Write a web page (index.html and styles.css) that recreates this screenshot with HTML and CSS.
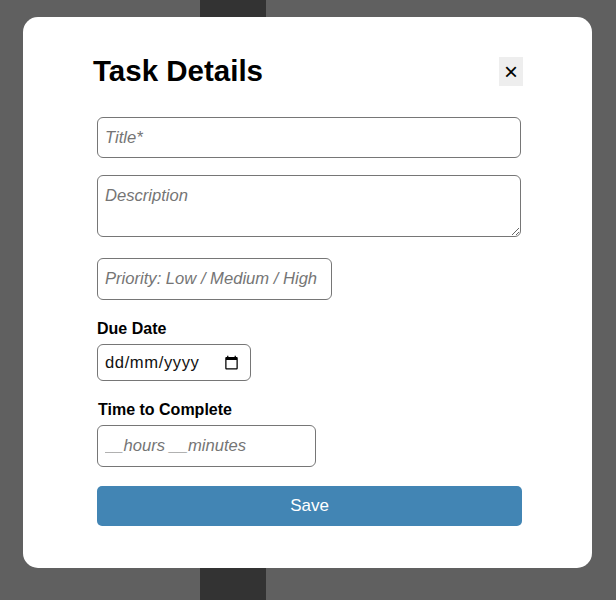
FILE: index.html
```html
<!DOCTYPE html>
<html lang="en">
<head>
<meta charset="utf-8">
<title>Task Details</title>
<link rel="stylesheet" href="styles.css">
</head>
<body>
<div class="modal">
  <div class="modal-header">
    <h2 class="modal-title">Task Details</h2>
    <button class="close-btn" type="button" aria-label="Close">×</button>
  </div>
  <form class="task-form">
    <input class="field field-title" type="text" placeholder="Title*">
    <textarea class="field field-desc" placeholder="Description"></textarea>
    <input class="field field-priority" type="text" placeholder="Priority: Low / Medium / High">
    <label class="field-label label-due">Due Date</label>
    <div class="field field-date" role="textbox" aria-label="Due Date">
      <span class="date-text">dd/mm/yyyy</span>
      <svg class="date-icon" width="15" height="15" viewBox="0 0 24 24" aria-hidden="true">
        <path d="M20 3h-1V1h-2v2H7V1H5v2H4c-1.1 0-2 .9-2 2v16c0 1.1.9 2 2 2h16c1.1 0 2-.9 2-2V5c0-1.1-.9-2-2-2zm0 18H4V8h16v13z" fill="#000"/>
      </svg>
    </div>
    <label class="field-label label-time">Time to Complete</label>
    <input class="field field-time" type="text" placeholder="__hours __minutes">
    <button class="save-btn" type="button">Save</button>
  </form>
</div>
</body>
</html>
```
FILE: styles.css
```css
html, body {
  margin: 0;
  padding: 0;
}
body {
  width: 616px;
  height: 600px;
  overflow: hidden;
  font-family: "Liberation Sans", Arial, sans-serif;
  background: linear-gradient(to right, #606060 0, #606060 200px, #333333 200px, #333333 266px, #606060 266px);
  padding-top: 17px;
  box-sizing: border-box;
}
.modal {
  margin-left: 23px;
  width: 569px;
  height: 551px;
  box-sizing: border-box;
  background: #ffffff;
  border-radius: 15px;
  padding: 40px 69px 0 70px;
}
.modal-header {
  display: flex;
  justify-content: space-between;
  align-items: flex-start;
  height: 29px;
}
.modal-title {
  margin: 0;
  font-size: 29.5px;
  line-height: 28px;
  font-weight: bold;
  color: #000;
}
.close-btn {
  width: 24px;
  height: 29px;
  padding: 0;
  border: none;
  background: #eeeeee;
  font-family: "Liberation Sans", Arial, sans-serif;
  font-size: 24px;
  line-height: 29px;
  color: #000;
}
.task-form {
  display: flex;
  flex-direction: column;
  align-items: flex-start;
  padding-left: 4px;
  margin-top: 31px;
}
.field {
  box-sizing: border-box;
  border: 1px solid #767676;
  border-radius: 6px;
  padding: 0 7px;
  font-family: "Liberation Sans", Arial, sans-serif;
  font-size: 16.6px;
  color: #000;
  background: #fff;
  margin: 0;
}
.field::placeholder {
  font-style: italic;
  color: #757575;
}
.field-title {
  width: 424px;
  height: 41px;
}
.field-desc {
  width: 424px;
  height: 62px;
  margin-top: 17px;
  padding-top: 10px;
  resize: vertical;
}
.field-priority {
  width: 235px;
  height: 42px;
  margin-top: 21px;
}
.field-label {
  font-size: 16px;
  font-weight: bold;
  line-height: 18px;
  color: #000;
}
.label-due {
  margin-top: 20px;
}
.field-date {
  width: 154px;
  height: 37px;
  margin-top: 6px;
  display: flex;
  align-items: center;
  justify-content: space-between;
  padding-right: 11px;
}
.date-text {
  letter-spacing: 0.6px;
  color: #111;
}
.date-icon {
  display: block;
}
.label-time {
  margin-top: 20px;
  padding-left: 1px;
}
.field-time {
  width: 219px;
  height: 42px;
  margin-top: 6px;
}
.save-btn {
  width: 425px;
  height: 40px;
  margin-top: 19px;
  border: none;
  border-radius: 5px;
  background: #4285b4;
  color: #fff;
  font-family: "Liberation Sans", Arial, sans-serif;
  font-size: 17px;
}
```
